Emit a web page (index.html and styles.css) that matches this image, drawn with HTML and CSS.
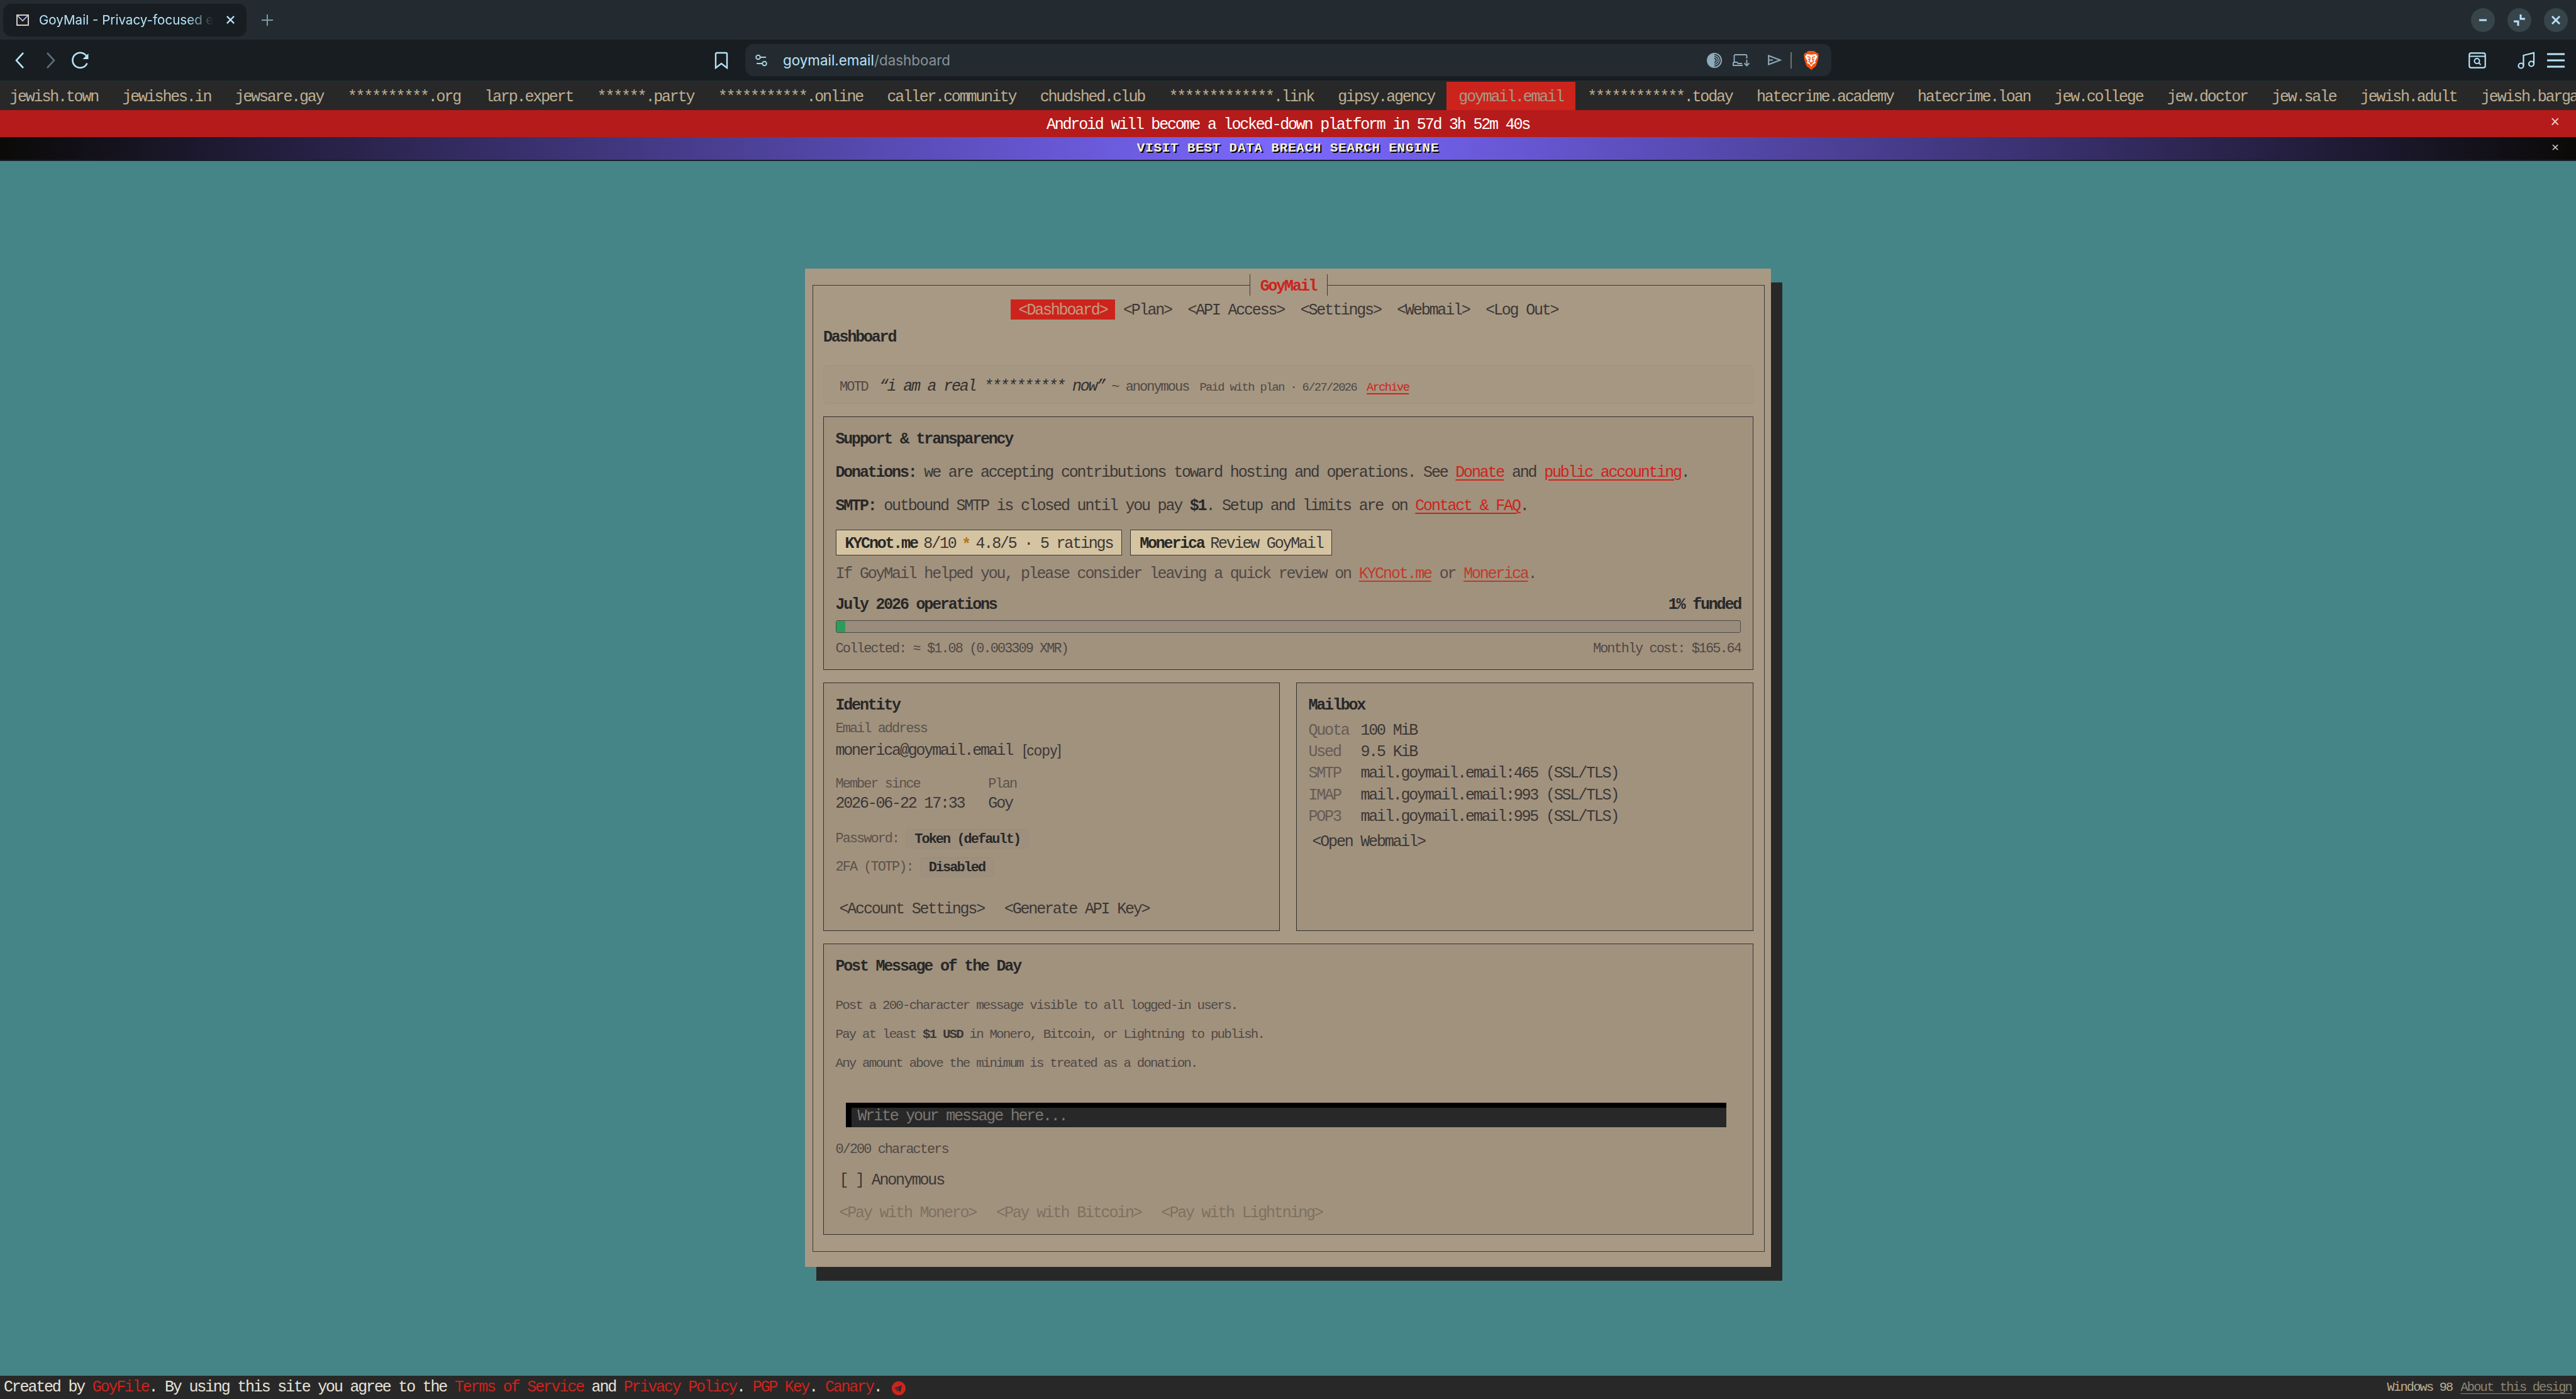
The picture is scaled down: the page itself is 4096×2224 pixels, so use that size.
FILE: index.html
```html
<!DOCTYPE html>
<html lang="en">
<head>
    <meta charset="UTF-8">
    <meta name="viewport" content="width=device-width, initial-scale=1.0">
    <title>GoyMail - Privacy-focused email</title>
    <link rel="stylesheet" href="styles.css">
</head>
<body>
    <!-- Tab strip -->
    <div class="tabs">
        <div class="tab">
            <svg class="favicon" viewBox="0 0 22 22"><rect width="22" height="22" fill="#1d1d1f"/><rect x="2" y="3" width="18" height="16" fill="none" stroke="#c9cdd0" stroke-width="2"/><path d="M3 4l8 8 8-8" fill="none" stroke="#c9cdd0" stroke-width="1.6"/><path d="M8 5h6l-3 4z" fill="#1b1b7a"/></svg>
            <span class="tab-title">GoyMail - Privacy-focused email</span>
            <svg class="tab-close" viewBox="0 0 16 16"><path d="M2 2l12 12M14 2L2 14" stroke="#b8e3fa" stroke-width="2.4"/></svg>
        </div>
        <svg class="tab-new" viewBox="0 0 18 18"><path d="M9 0v18M0 9h18" stroke="#7d9aa8" stroke-width="2"/></svg>
        <div class="window-buttons">
            <span><svg viewBox="0 0 38 38"><path d="M13 19h12" stroke="#b8e3fa" stroke-width="3"/></svg></span>
            <span><svg viewBox="0 0 38 38"><path d="M21 10v7h7M10 21h7v7" fill="none" stroke="#b8e3fa" stroke-width="3"/></svg></span>
            <span><svg viewBox="0 0 38 38"><path d="M13 13l12 12M25 13L13 25" stroke="#b8e3fa" stroke-width="2.8"/></svg></span>
        </div>
    </div>

    <!-- Toolbar -->
    <div class="toolbar">
        <div class="nav-icons">
            <svg viewBox="0 0 28 28"><path d="M19 2L8 14l11 12" fill="none" stroke="#b8e3fa" stroke-width="2.6"/></svg>
            <svg viewBox="0 0 28 28"><path d="M9 2l11 12L9 26" fill="none" stroke="#5b6f7a" stroke-width="2.6"/></svg>
            <svg viewBox="0 0 28 28"><path d="M24.500 18.500A12 12 0 1 1 24 8" fill="none" stroke="#b8e3fa" stroke-width="2.6"/><path d="M26.500 3v9h-9z" fill="#b8e3fa"/></svg>
        </div>
        <svg class="bookmark" viewBox="0 0 22 28"><path d="M2 26V4q0-2 2-2h14q2 0 2 2v22l-9-7z" fill="none" stroke="#b8e3fa" stroke-width="2.4"/></svg>
        <div class="url-bar">
            <svg class="tune" viewBox="0 0 20 20"><circle cx="4.500" cy="5" r="3.300" fill="none" stroke="#a9cfe2" stroke-width="2"/><path d="M8 5h9M2 15h9" stroke="#a9cfe2" stroke-width="2"/><circle cx="14.500" cy="15" r="3.300" fill="none" stroke="#a9cfe2" stroke-width="2"/></svg>
            <span class="url">goymail.email<i>/dashboard</i></span>
            <div class="url-icons">
                <svg width="24" height="24" viewBox="0 0 24 24"><path d="M12 0a12 12 0 0 0 0 24z" fill="#8fabba"/><g fill="none" stroke="#8fabba"><path d="M12 1a11 11 0 0 1 0 22" stroke-width="2"/><path d="M12 4.500a7.500 7.500 0 0 1 0 15" stroke-width="1.600"/><path d="M12 7.500a4.500 4.500 0 0 1 0 9" stroke-width="1.600"/></g><path d="M12 10a2 2 0 0 1 0 4z" fill="#8fabba"/></svg>
                <svg width="27" height="20" viewBox="0 0 27 20"><path d="M2.500 13V3q0-2 2-2h16q2 0 2 2v4M1 13h6l2 2h6M1 13v5h15M22.500 9v9M18.500 14.500l4 4 4-4" fill="none" stroke="#8fabba" stroke-width="1.900"/></svg>
                <svg width="22" height="17" viewBox="0 0 22 17"><path d="M1.200 1.500l18.500 7-18.500 7zM1 8.500h7" fill="none" stroke="#8fabba" stroke-width="2"/></svg>
                <b class="divider"></b>
                <svg width="26" height="30" viewBox="0 0 26 30"><path d="M8 0h10l3 3h2l2 4-1 3 .5 2-4 12-7.500 6-7.500-6-4-12L2 10 1 7l2-4h2z" fill="#fb4f0b"/><path d="M6 5l7 1 7-1 3 4-4 7 1 3-4 2-3 4-3-4-4-2 1-3-4-7z" fill="#fff"/><path d="M7 9l4 1v4l-2 3 4 2 4-2-2-3v-4l4-1M8 13l3 1M18 13l-3 1M11 20l2 1 2-1" fill="none" stroke="#fb4f0b" stroke-width="1.400"/></svg>
            </div>
        </div>
        <div class="menu-icons">
            <svg width="28" height="26" viewBox="0 0 28 26"><rect x="1.300" y="1.300" width="25.400" height="23.400" rx="3" fill="none" stroke="#b8e3fa" stroke-width="2.200"/><path d="M1 6.500h26" stroke="#b8e3fa" stroke-width="2"/><circle cx="13.500" cy="14" r="4" fill="none" stroke="#b8e3fa" stroke-width="2"/><path d="M16.500 17l3 3" stroke="#b8e3fa" stroke-width="2"/></svg>
            <svg class="music" width="28" height="28" viewBox="0 0 28 28"><g fill="none" stroke="#b8e3fa" stroke-width="2.200"><circle cx="5.500" cy="22.500" r="4"/><circle cx="22" cy="19.500" r="4"/><path d="M9.500 22V6L26 2v17"/></g></svg>
            <svg width="28" height="24" viewBox="0 0 28 24"><path d="M0 2h28M0 12h28M0 22h28" stroke="#b8e3fa" stroke-width="3"/></svg>
        </div>
    </div>

    <!-- Domain list -->
    <nav class="domains">
        <a>jewish.town</a><a>jewishes.in</a><a>jewsare.gay</a><a>**********.org</a><a>larp.expert</a><a>******.party</a><a>***********.online</a><a>caller.community</a><a>chudshed.club</a><a>*************.link</a><a>gipsy.agency</a><a class="active">goymail.email</a><a>************.today</a><a>hatecrime.academy</a><a>hatecrime.loan</a><a>jew.college</a><a>jew.doctor</a><a>jew.sale</a><a>jewish.adult</a><a>jewish.bargains</a>
    </nav>

    <div class="alert">Android will become a locked-down platform in 57d 3h 52m 40s<span class="dismiss">×</span></div>
    <div class="promo">VISIT BEST DATA BREACH SEARCH ENGINE<span class="dismiss">×</span></div>

    <main>
        <div class="panel">
            <fieldset>
                <legend>GoyMail</legend>
                <nav class="menu">
                    <a class="active">&lt;Dashboard&gt;</a><a>&lt;Plan&gt;</a><a>&lt;API Access&gt;</a><a>&lt;Settings&gt;</a><a>&lt;Webmail&gt;</a><a>&lt;Log Out&gt;</a>
                </nav>
                <h1>Dashboard</h1>

                <div class="motd">
                    <span class="small">MOTD</span>
                    <em>“i am a real ********** now”</em>
                    <span class="small author">~ anonymous</span>
                    <span class="tiny">Paid with plan · 6/27/2026</span>
                    <a class="tiny link">Archive</a>
                </div>

                <!-- Support -->
                <section class="card support">
                    <h2>Support &amp; transparency</h2>
                    <p><b>Donations:</b> we are accepting contributions toward hosting and operations. See <a class="link">Donate</a> and <a class="link">public accounting</a>.</p>
                    <p><b>SMTP:</b> outbound SMTP is closed until you pay <b>$1</b>. Setup and limits are on <a class="link">Contact &amp; FAQ</a>.</p>
                    <div class="badges">
                        <a><b>KYCnot.me</b><span>8/10</span><i>*</i><span>4.8/5 · 5 ratings</span></a>
                        <a><b>Monerica</b><span>Review GoyMail</span></a>
                    </div>
                    <p class="note">If GoyMail helped you, please consider leaving a quick review on <a class="link">KYCnot.me</a> or <a class="link">Monerica</a>.</p>
                    <div class="split funding"><b>July 2026 operations</b><b>1% funded</b></div>
                    <div class="progress"><div style="width: 1%"></div></div>
                    <div class="split small totals"><span>Collected: ≈ $1.08 (0.003309 XMR)</span><span>Monthly cost: $165.64</span></div>
                </section>

                <div class="columns">
                    <section class="card">
                        <h2>Identity</h2>
                        <div class="small label email-label">Email address</div>
                        <div class="email">monerica@goymail.email<button>[copy]</button></div>
                        <div class="facts">
                            <div><div class="small label">Member since</div><div>2026-06-22 17:33</div></div>
                            <div><div class="small label">Plan</div><div>Goy</div></div>
                        </div>
                        <div class="status small"><span>Password:</span><b>Token (default)</b></div>
                        <div class="status small"><span>2FA (TOTP):</span><b>Disabled</b></div>
                        <div class="buttons account"><a>&lt;Account Settings&gt;</a><a>&lt;Generate API Key&gt;</a></div>
                    </section>
                    <section class="card">
                        <h2>Mailbox</h2>
                        <dl>
                            <dt>Quota</dt><dd>100 MiB</dd>
                            <dt>Used</dt><dd>9.5 KiB</dd>
                            <dt>SMTP</dt><dd>mail.goymail.email:465 (SSL/TLS)</dd>
                            <dt>IMAP</dt><dd>mail.goymail.email:993 (SSL/TLS)</dd>
                            <dt>POP3</dt><dd>mail.goymail.email:995 (SSL/TLS)</dd>
                        </dl>
                        <div class="buttons"><a>&lt;Open Webmail&gt;</a></div>
                    </section>
                </div>

                <!-- Post form -->
                <section class="card post">
                    <h2>Post Message of the Day</h2>
                    <div class="rules">
                        <p>Post a 200-character message visible to all logged-in users.</p>
                        <p>Pay at least <b>$1 USD</b> in Monero, Bitcoin, or Lightning to publish.</p>
                        <p>Any amount above the minimum is treated as a donation.</p>
                    </div>
                    <div class="message">Write your message here...</div>
                    <div class="small counter">0/200 characters</div>
                    <div class="check">[ ] Anonymous</div>
                    <div class="buttons pay"><a>&lt;Pay with Monero&gt;</a><a>&lt;Pay with Bitcoin&gt;</a><a>&lt;Pay with Lightning&gt;</a></div>
                </section>
            </fieldset>
        </div>
    </main>

    <footer>
        <div>Created by <a>GoyFile</a>. By using this site you agree to the <a>Terms of Service</a> and <a>Privacy Policy</a>. <a>PGP Key</a>. <a>Canary</a>.</div>
        <svg width="22" height="22" viewBox="0 0 22 22"><circle cx="11" cy="11" r="11" fill="#cc241d"/><path d="M4 11l12-5-2.500 11-4-3-1.500 2-.5-3.500z" fill="#282828"/><path d="M7.500 12.500l6-4.500-4.500 5.500z" fill="#cc241d"/></svg>
        <div class="theme"><span>Windows 98</span><u>About this design</u></div>
    </footer>
</body>
</html>
```

FILE: styles.css
```css
* {
    box-sizing: border-box;
}

body {
    margin: 0;
    width: 4096px;
    height: 2224px;
    overflow: hidden;
    background: #458588;
    color: #3c3836;
    font-family: "Liberation Mono", monospace;
    font-size: 25px;
    letter-spacing: -0.088em;
    line-height: 32px;
    display: flex;
    flex-direction: column;
}

h1, h2, p, dl, dd {
    margin: 0;
}

h1, h2 {
    font-size: 25px;
    color: #282828;
}

b {
    color: #282828;
}

svg {
    display: block;
    flex: none;
}

.small {
    font-size: 21.875px;
    letter-spacing: -0.088em;
}

.tiny {
    font-size: 18.75px;
    letter-spacing: -0.088em;
}

.link {
    color: #cc241d;
    text-decoration: underline;
    text-decoration-thickness: 2px;
    text-underline-offset: 4px;
}

/* Browser */
.tabs {
    height: 63px;
    background: #232b30;
    display: flex;
    align-items: center;
    padding: 0 13px 0 5px;
    font-family: Inter, sans-serif;
    letter-spacing: 0;
}

.tab {
    width: 387px;
    height: 52px;
    border-radius: 13px;
    background: #171d20;
    display: flex;
    align-items: center;
    padding-left: 20px;
}

.favicon {
    width: 22px;
    height: 22px;
}

.tab-title {
    width: 278px;
    margin-left: 15px;
    overflow: hidden;
    white-space: nowrap;
    font-size: 20.6px;
    color: #b8e3fa;
    mask-image: linear-gradient(90deg, #000 85%, transparent);
}

.tab-close {
    width: 15px;
    height: 15px;
    margin-left: 19px;
}

.tab-new {
    width: 18px;
    height: 18px;
    margin-left: 24px;
}

.window-buttons {
    margin-left: auto;
    display: flex;
    gap: 20px;
}

.window-buttons span {
    width: 38px;
    height: 38px;
    border-radius: 50%;
    background: #37454b;
}

.toolbar {
    height: 67px;
    background: #171d20;
    border-bottom: 2px solid #212b31;
    display: flex;
    align-items: center;
    padding: 0 18px;
    letter-spacing: 0;
}

.nav-icons {
    display: flex;
    gap: 20px;
    width: 1118px;
}

.nav-icons svg {
    width: 28px;
    height: 28px;
}

.bookmark {
    width: 22px;
    height: 28px;
}

.url-bar {
    width: 1727px;
    height: 51px;
    margin-left: 27px;
    padding: 0 19px 0 16px;
    border-radius: 13px;
    background: #232b30;
    display: flex;
    align-items: center;
}

.tune {
    width: 20px;
    height: 20px;
}

.url {
    margin-left: 24px;
    font: 22.4px Inter, sans-serif;
    color: #b8e3fa;
}

.url i {
    font-style: normal;
    color: #8a9298;
}

.url-icons {
    margin-left: auto;
    display: flex;
    align-items: center;
}

.url-icons svg:nth-child(2) {
    margin: 0 29px 0 17px;
}

.divider {
    width: 2px;
    height: 26px;
    margin: 0 18px 0 14px;
    background: #6c757a;
}

.menu-icons {
    margin-left: auto;
    display: flex;
    align-items: center;
    gap: 19px;
}

.music {
    margin-left: 31px;
}

/* Top bars */
.domains {
    height: 45px;
    background: #282828;
    color: #bdae93;
    display: flex;
    white-space: nowrap;
    line-height: 49px;
    overflow: hidden;
}

.domains a {
    flex: none;
    padding: 0 19.2px;
}

.domains a:first-child {
    margin-left: -4px;
}

.domains .active {
    background: #cc241d;
    color: #a89984;
}

.alert,
.promo {
    position: relative;
    text-align: center;
}

.alert {
    height: 43px;
    line-height: 47px;
    background: #b51b1b;
    color: #fff;
}

.promo {
    height: 38px;
    line-height: 36px;
    background: linear-gradient(90deg, #0b0a08, #7b68ff 50%, #0b0a08);
    border-bottom: 2px solid #16202a;
    color: #f5f0e0;
    font-size: 20.8px;
    font-weight: bold;
    letter-spacing: 0.87px;
    text-shadow: 2px 2px 0 #000;
}

.dismiss {
    position: absolute;
    right: 28px;
    top: -3px;
    color: #e9c9c9;
    font-weight: normal;
    text-shadow: none;
}

.promo .dismiss {
    right: 26px;
    top: 0;
    color: #ccc;
}

/* Panel */
main {
    flex: 1;
    padding-top: 171px;
}

.panel {
    width: 1536px;
    height: 1587px;
    margin: 0 auto;
    padding: 9px 10px 23px 12px;
    background: #a89984;
    box-shadow: 18px 22px 0 #282828;
}

fieldset {
    height: 1554px;
    margin: 0;
    padding: 0 17px 0 16px;
    border: 1px solid #3c3836;
}

legend {
    width: 124px;
    height: 34px;
    margin: 0 auto;
    padding: 0;
    line-height: 40px;
    border: solid #3c3836;
    border-width: 0 1px;
    text-align: center;
    font-weight: bold;
    color: #cc241d;
}

.menu {
    display: flex;
    justify-content: center;
    margin: 6px 0 13px;
}

.menu a {
    height: 32px;
    line-height: 36px;
    padding: 0 12.8px;
}

.menu .active {
    background: #cc241d;
    color: #c49a80;
}

.motd {
    height: 61px;
    margin: 28px 0 20px;
    padding: 6px 25px 0;
    border: 1px solid #9e937f;
    border-radius: 5px;
    background: #a69782;
    display: flex;
    align-items: baseline;
    line-height: 54px;
    color: #504945;
}

.motd em {
    margin: 0 11px 0 18px;
    color: #32302f;
}

.motd .author {
    margin-right: 17px;
}

.motd .tiny {
    margin-right: 16px;
}

.card {
    padding: 20px 19px 0 18.5px;
    border: 1px solid #32302f;
    background: #a1927e;
}

.support {
    height: 403px;
}

.support p {
    margin-top: 21px;
}

.badges {
    display: flex;
    gap: 13px;
    margin-top: 21px;
}

.badges a {
    height: 41px;
    line-height: 43px;
    padding: 0 14px;
    border: 1px solid #3c3836;
    background: #d5c4a1;
    display: flex;
    gap: 9.6px;
}

.badges i {
    font-style: normal;
    font-weight: bold;
    color: #b57614;
    line-height: 48px;
}

.support .note {
    margin-top: 14px;
    color: #504945;
}

.note .link {
    color: #c23a2c;
}

.split {
    display: flex;
    justify-content: space-between;
}

.funding {
    margin-top: 17px;
}

.progress {
    height: 20px;
    margin-top: 8px;
    border: 1px solid #504945;
    border-radius: 3px;
    background: #998c7c;
}

.progress div {
    height: 100%;
    background: #2a9d5c;
}

.totals {
    margin-top: 10px;
    color: #504945;
}

.columns {
    height: 395px;
    margin: 20px 0;
    display: grid;
    grid-template-columns: 726px 1fr;
    gap: 26px;
}

.label {
    line-height: 30px;
    color: #5a524b;
}

.email-label {
    margin-top: 6px;
}

.email {
    display: flex;
    margin-top: 4px;
}

.email button {
    margin-left: 16px;
    padding: 0;
    border: 0;
    background: none;
    font: 23px/30px "Liberation Sans", sans-serif;
    color: #3c3836;
    height: 30px;
}

.facts {
    display: flex;
    gap: 38px;
    margin: 22px 0 24px;
}

.status {
    display: flex;
    gap: 11px;
    height: 31px;
    margin-bottom: 14px;
    line-height: 32px;
    color: #5a524b;
}

.status b {
    padding: 0 13px;
    border: 1px solid #998c7c;
    border-radius: 5px;
    background: #9e907d;
}

.buttons {
    display: flex;
    gap: 32px;
    padding-left: 6px;
}

.account {
    margin-top: 36px;
}

dl {
    display: grid;
    grid-template-columns: 83px 1fr;
    line-height: 34.2px;
    margin: 7px 0 7px;
}

dt {
    color: #665c54;
}

.post {
    height: 463px;
}

.rules {
    margin: 23px 0 39px;
    font-size: 20.8px;
    letter-spacing: -0.088em;
    line-height: 46px;
    color: #504945;
}

.rules b {
    color: #3c3836;
}

.message {
    width: 1400px;
    height: 39px;
    margin-left: 16px;
    padding-left: 10px;
    border: solid #000;
    border-width: 8px 0 0 9px;
    background: #282828;
    color: #7c7772;
    line-height: 28px;
}

.counter {
    margin-top: 21px;
    line-height: 30px;
    color: #504945;
}

.check {
    margin-top: 18px;
    padding-left: 6px;
}

.pay {
    margin-top: 20px;
    color: #7d715f;
}

footer {
    height: 37px;
    padding: 0 7px 0 6px;
    background: #282828;
    color: #ebdbb2;
    display: flex;
    align-items: center;
    line-height: 40px;
}

footer div:first-child {
    color: #e6e2da;
}

footer a {
    color: #cc241d;
}

footer svg {
    margin: 3px 0 0 16px;
}

.theme {
    margin-left: auto;
    display: flex;
    gap: 13px;
    font-size: 20.3px;
    letter-spacing: -0.088em;
    line-height: 35px;
    color: #bdae93;
}

.theme u {
    color: #8f8473;
    text-decoration-thickness: 1px;
    text-underline-offset: 4px;
}
```
